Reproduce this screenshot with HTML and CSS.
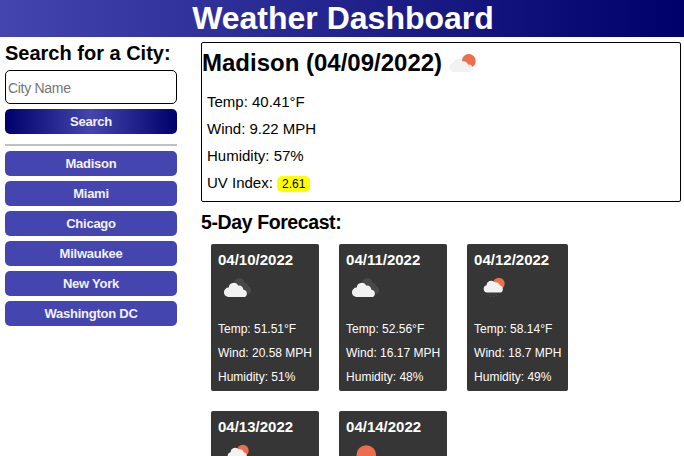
FILE: index.html
```html
<!DOCTYPE html>
<html lang="en">
<head>
<meta charset="utf-8">
<title>Weather Dashboard</title>
<link rel="stylesheet" href="styles.css">
</head>
<body>
<svg class="defs" width="0" height="0" aria-hidden="true">
  <symbol id="clouds" viewBox="0 0 40 40">
    <path class="dark" d="M16 10.5A5 5 0 0 1 26.5 10A3.2 3.2 0 0 1 30 13A4.2 4.2 0 0 1 31.5 20.5Q29 21.5 26 20Z"/>
    <path class="white" d="M10.5 24A4.6 4.6 0 0 1 10.7 14.6A5.1 5.1 0 0 1 20.4 12.7A4.2 4.2 0 0 1 25.4 16.7A3.8 3.8 0 0 1 26.5 24Z"/>
  </symbol>
  <symbol id="rain" viewBox="0 0 40 40">
    <circle class="sun" cx="24.8" cy="10.6" r="5.9"/>
    <path class="white" d="M13 19.6A3.7 3.7 0 0 1 12.6 12.3A4.7 4.7 0 0 1 20.8 9.3A4 4 0 0 1 25.8 12.6A3.6 3.6 0 0 1 26.3 19.6Z"/>
    <path class="drops" d="M15 20.5l-.7 1.2M18 20.5l-.7 1.2M21 20.5l-.7 1.2M16.5 23l-.6 1M19.7 23l-.6 1M23 22l-.6 1"/>
  </symbol>
</svg>
<header class="header"><h1>Weather Dashboard</h1></header>
<div class="page">
  <aside class="sidebar">
    <h2 class="search-title">Search for a City:</h2>
    <input class="city-input" type="text" placeholder="City Name">
    <button class="btn search-btn">Search</button>
    <div class="divider"></div>
    <button class="btn">Madison</button>
    <button class="btn">Miami</button>
    <button class="btn">Chicago</button>
    <button class="btn">Milwaukee</button>
    <button class="btn">New York</button>
    <button class="btn">Washington DC</button>
  </aside>
  <main class="main">
    <section class="current">
      <h2 class="current-title">Madison (04/09/2022)
        <svg class="current-icon" viewBox="0 0 28 20">
          <circle class="sun" cx="19.8" cy="8" r="6.9"/>
          <path fill="#f2f2f2" d="M4.5 19A4.5 4.5 0 0 1 4.7 10A5 5 0 0 1 13.9 8.4A4.2 4.2 0 0 1 19 11.8A3.7 3.7 0 0 1 20.8 19Z"/>
        </svg>
      </h2>
      <p>Temp: 40.41°F</p>
      <p>Wind: 9.22 MPH</p>
      <p>Humidity: 57%</p>
      <p>UV Index: <span class="uv">2.61</span></p>
    </section>
    <h3 class="forecast-title">5-Day Forecast:</h3>
    <section class="forecast">
      <article class="card"><h4>04/10/2022</h4><svg class="icon"><use href="#clouds"/></svg><p>Temp: 51.51°F</p><p>Wind: 20.58 MPH</p><p>Humidity: 51%</p></article>
      <article class="card"><h4>04/11/2022</h4><svg class="icon"><use href="#clouds"/></svg><p>Temp: 52.56°F</p><p>Wind: 16.17 MPH</p><p>Humidity: 48%</p></article>
      <article class="card"><h4>04/12/2022</h4><svg class="icon"><use href="#rain"/></svg><p>Temp: 58.14°F</p><p>Wind: 18.7 MPH</p><p>Humidity: 49%</p></article>
      <article class="card"><h4>04/13/2022</h4><svg class="icon"><use href="#rain"/></svg></article>
      <article class="card"><h4>04/14/2022</h4><svg class="icon"><circle class="sun" cx="20.3" cy="15" r="9.8"/></svg></article>
    </section>
  </main>
</div>
</body>
</html>
```
FILE: styles.css
```css
* { box-sizing: border-box; margin: 0; padding: 0; }
html { height: 100%; overflow: hidden; }
body {
  height: 100%;
  overflow: hidden;
  font-family: "Liberation Sans", Arial, sans-serif;
  color: #000;
  background: #fff;
}
.defs { position: absolute; }
.header {
  height: 37px;
  background: linear-gradient(to right, #4545b0, #00006a);
  color: #fff;
  text-align: center;
}
.header h1 { font-size: 32px; line-height: 37px; padding-left: 2px; }
.page { display: flex; }
.sidebar {
  flex: none;
  width: 182px;
  padding: 5px;
  display: flex;
  flex-direction: column;
}
.search-title { font-size: 20px; line-height: 23px; white-space: nowrap; margin-bottom: 5px; }
.city-input {
  height: 34px;
  width: 100%;
  border: 1px solid #000;
  border-radius: 5px;
  padding: 1px 2px 0;
  font: 14px "Liberation Sans", Arial, sans-serif;
  letter-spacing: -0.3px;
  margin-bottom: 5px;
}
.city-input::placeholder { color: #757575; }
.btn {
  height: 25px;
  border: 0;
  border-radius: 5px;
  background: #4545b0;
  color: #f2f2f2;
  font: bold 13px/25px "Liberation Sans", Arial, sans-serif;
  letter-spacing: -0.25px;
  margin-bottom: 5px;
}
.search-btn { background: linear-gradient(to right, #00006a, #4545b0, #00006a); }
.divider { height: 2px; background: #c0c0c0; margin: 5px 0; }
.main { flex: 1; padding: 5px 3px 0 19px; min-width: 0; }
.current { height: 160px; border: 1px solid #000; border-radius: 2px; }
.current-title {
  height: 50px;
  display: flex;
  align-items: center;
  font-size: 24px;
  line-height: 28px;
  padding-bottom: 11px;
}
.current-icon { width: 28px; height: 20px; margin-left: 7px; }
.current p { font-size: 15px; line-height: 17px; margin: 0 5px 10px; }
.uv {
  display: inline-block;
  background: #ff0;
  border-radius: 5px;
  padding: 0 5px;
  font-size: 12px;
  line-height: 16px;
}
.forecast-title { font-size: 19.5px; letter-spacing: -0.4px; line-height: 23px; margin-top: 9px; }
.forecast {
  display: grid;
  grid-template-columns: repeat(3, max-content);
  gap: 20px;
  padding: 10px 10px 0;
}
.card {
  height: 147px;
  padding: 7px;
  border-radius: 2px;
  background: #363636;
  color: #fff;
}
.card h4 { font-size: 15px; line-height: 17px; }
.icon { display: block; width: 40px; height: 40px; margin: 5px 0 9px; }
.card p { font-size: 12px; line-height: 14px; margin-bottom: 10px; white-space: nowrap; }
.sun { fill: #ec6e4c; }
.white { fill: #f2f2f2; }
.dark { fill: #484848; }
.drops { stroke: #555; stroke-width: .8; fill: none; }
```
